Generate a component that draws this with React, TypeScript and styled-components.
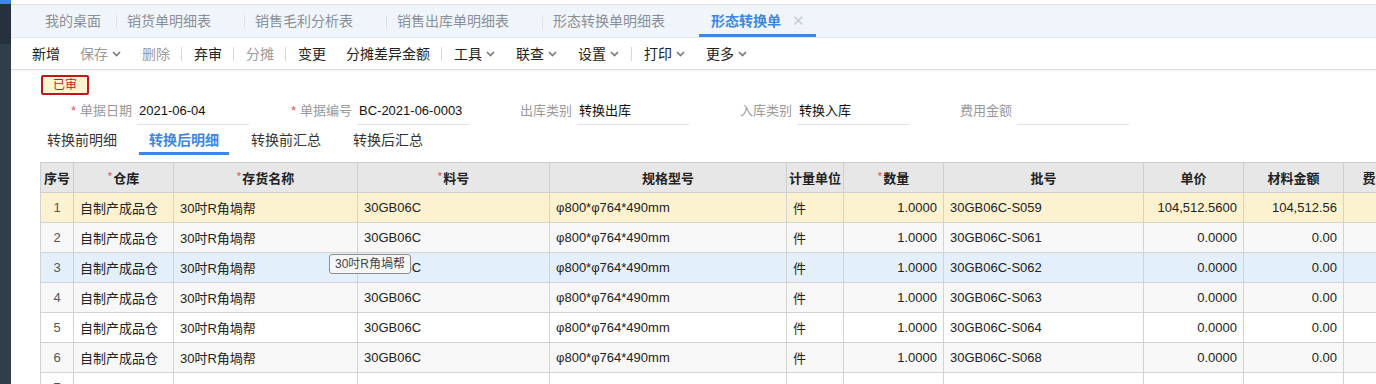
import React from "react";
import styled, { createGlobalStyle, css } from "styled-components";

const Global = createGlobalStyle`
  html, body { margin: 0; padding: 0; background: #fff; overflow: hidden; }
  body { font-family: "Liberation Sans", "Noto Sans CJK SC", sans-serif; color: #333; }
  * { box-sizing: border-box; }
`;

const Page = styled.div`
  display: flex;
  width: 1376px;
  height: 384px;
  overflow: hidden;
`;

const Sidebar = styled.div`
  width: 11px;
  flex: none;
  background: linear-gradient(#3d86f0 0, #3d86f0 4px, #27313d 4px, #27313d 44px, #323d4a 44px);
`;

const Main = styled.div`
  flex: 1;
  min-width: 0;
  display: flex;
  flex-direction: column;
  padding-top: 4px;
  & > * { flex: none; }
`;

const TabBar = styled.div`
  display: flex;
  align-items: stretch;
  height: 34px;
  padding-left: 24px;
  background: #f0f5fc;
  border-top: 1px solid #dcdfe3;
  border-bottom: 1px solid #e3e6ea;
`;

const Tab = styled.div<{ $closable?: boolean; $active?: boolean; $sep?: boolean }>`
  display: flex;
  align-items: center;
  gap: 11px;
  font-size: 14px;
  line-height: 20px;
  color: #8a8f96;
  padding: 0 ${(p) => (p.$closable ? 34 : 16)}px 1px 10px;
  position: relative;
  ${(p) =>
    p.$sep &&
    css`
      &::after {
        content: "";
        position: absolute;
        right: 0;
        top: 10px;
        height: 14px;
        width: 1px;
        background: #dde2e8;
      }
    `}
  ${(p) =>
    p.$active &&
    css`
      color: #3b86e6;
      font-weight: bold;
      padding: 2px 11px 0 12px;
      border-bottom: 3px solid #3b86e6;
    `}
`;

const Close = styled.span`
  font-weight: normal;
  color: #c8ccd1;
  font-size: 15px;
  line-height: 16px;
`;

const Toolbar = styled.div`
  display: flex;
  align-items: center;
  height: 32px;
  padding-left: 11px;
  background: #fff;
  border-bottom: 1px solid #d9d9d9;
  box-shadow: 0 1px 2px rgba(0, 0, 0, 0.05);
`;

const ToolItem = styled.div<{ $disabled?: boolean }>`
  display: flex;
  align-items: center;
  gap: 4px;
  padding: 0 10px;
  font-size: 14px;
  line-height: 20px;
  color: ${(p) => (p.$disabled ? "#9a9a9a" : "#222")};
`;

const ToolSep = styled.div`
  width: 1px;
  height: 14px;
  margin: 0 2px 0 1px;
  background: #d8d8d8;
`;

const Chevron = () => (
  <svg width="10" height="6" viewBox="0 0 10 6" style={{ marginTop: 1 }}>
    <polyline points="1,1 4.5,4.5 8,1" fill="none" stroke="#777" strokeWidth="1.6" />
  </svg>
);

const Content = styled.div`
  padding: 5px 0 0 0;
  display: flex;
  flex-direction: column;
  & > * { flex: none; }
`;

const BadgeRow = styled.div`
  padding-left: 30px;
  display: flex;
`;

const Badge = styled.div`
  height: 20px;
  width: 48px;
  border: 2px solid #c01818;
  border-radius: 2px;
  background: #fff6cf;
  color: #c01818;
  font-size: 12px;
  line-height: 16px;
  text-align: center;
`;

const FormRow = styled.div`
  display: flex;
  margin-top: 4px;
  padding-left: 18px;
`;

const Field = styled.div`
  display: flex;
  align-items: stretch;
  width: 220px;
  height: 26px;
`;

const Label = styled.div`
  width: 103px;
  margin-right: 5px;
  text-align: right;
  font-size: 13px;
  line-height: 24px;
  color: #999;
`;

const Req = styled.span`
  color: #e05555;
  margin-right: 4px;
`;

const Input = styled.div`
  width: 112px;
  border-bottom: 1px solid #e2e2e2;
  font-size: 13px;
  line-height: 24px;
  color: #111;
  padding-left: 2px;
  white-space: nowrap;
`;

const SubTabs = styled.div`
  display: flex;
  padding-left: 20px;
`;

const SubTab = styled.div<{ $active?: boolean }>`
  margin: 0 6px;
  padding: 3px 10px 0;
  font-size: 14px;
  line-height: 24px;
  color: ${(p) => (p.$active ? "#3b86e6" : "#333")};
  font-weight: ${(p) => (p.$active ? "bold" : "normal")};
  border-bottom: 3px solid ${(p) => (p.$active ? "#3b86e6" : "transparent")};
`;

const TableWrap = styled.div`
  margin-top: 7px;
  padding-left: 29px;
`;

const Table = styled.table`
  border-collapse: collapse;
  table-layout: fixed;
  width: 1393px;
  font-size: 13px;
`;

const Th = styled.th`
  height: 30px;
  padding: 0 2px;
  background: #e7e7e7;
  border: 1px solid #cfcfcf;
  font-weight: bold;
  color: #222;
  text-align: center;
  white-space: nowrap;
  overflow: hidden;
`;

const Star = styled.span`
  color: #e04848;
  font-weight: normal;
  font-size: 11px;
  vertical-align: 3px;
  margin-right: 1px;
`;

const Tr = styled.tr<{ $bg: string }>`
  height: 30px;
  background: ${(p) => p.$bg};
`;

const Td = styled.td<{ $align?: string; $muted?: boolean }>`
  border: 1px solid #d2d2d2;
  padding: 0 6px;
  text-align: ${(p) => p.$align || "left"};
  color: ${(p) => (p.$muted ? "#555" : "#222")};
  white-space: nowrap;
  overflow: hidden;
  position: relative;
`;

const NameCell = styled(Td)`
  overflow: visible;
`;

const Tooltip = styled.div`
  position: absolute;
  left: 155px;
  top: 1px;
  z-index: 2;
  height: 20px;
  padding: 0 5px;
  background: #f7f7f7;
  border: 1px solid #8d8d8d;
  border-radius: 3px;
  font-size: 12px;
  line-height: 18px;
  color: #444;
  white-space: nowrap;
`;

type Col = { title: string; w: number; req?: boolean };
const cols: Col[] = [
  { title: "序号", w: 33 },
  { title: "仓库", w: 100, req: true },
  { title: "存货名称", w: 184, req: true },
  { title: "料号", w: 192, req: true },
  { title: "规格型号", w: 237 },
  { title: "计量单位", w: 57 },
  { title: "数量", w: 100, req: true },
  { title: "批号", w: 200 },
  { title: "单价", w: 100 },
  { title: "材料金额", w: 100 },
  { title: "费用金额", w: 90 },
];

const batches = ["S059", "S061", "S062", "S063", "S064", "S068"];
const rowBg = ["#fcf2cf", "#f8f8f8", "#e4effc", "#f8f8f8", "#ffffff", "#f8f8f8", "#ffffff"];

const tabs = ["我的桌面", "销货单明细表", "销售毛利分析表", "销售出库单明细表", "形态转换单明细表"];

const tools: ({ t: string; d?: boolean; c?: boolean } | "sep")[] = [
  { t: "新增" },
  { t: "保存", d: true, c: true },
  { t: "删除", d: true },
  "sep",
  { t: "弃审" },
  "sep",
  { t: "分摊", d: true },
  "sep",
  { t: "变更" },
  { t: "分摊差异金额" },
  "sep",
  { t: "工具", c: true },
  { t: "联查", c: true },
  { t: "设置", c: true },
  "sep",
  { t: "打印", c: true },
  { t: "更多", c: true },
];

export default function App() {
  return (
    <>
      <Global />
      <Page>
        <Sidebar />
        <Main>
          <TabBar>
            {tabs.map((t, i) => (
              <Tab key={t} $closable={i > 0} $sep={i < tabs.length - 1}>
                {t}
              </Tab>
            ))}
            <Tab $active>
              形态转换单<Close>✕</Close>
            </Tab>
          </TabBar>
          <Toolbar>
            {tools.map((it, i) =>
              it === "sep" ? (
                <ToolSep key={i} />
              ) : (
                <ToolItem key={i} $disabled={it.d}>
                  {it.t}
                  {it.c && <Chevron />}
                </ToolItem>
              )
            )}
          </Toolbar>
          <Content>
            <BadgeRow>
              <Badge>已审</Badge>
            </BadgeRow>
            <FormRow>
              <Field>
                <Label>
                  <Req>*</Req>单据日期
                </Label>
                <Input>2021-06-04</Input>
              </Field>
              <Field>
                <Label>
                  <Req>*</Req>单据编号
                </Label>
                <Input>BC-2021-06-0003</Input>
              </Field>
              <Field>
                <Label>出库类别</Label>
                <Input>转换出库</Input>
              </Field>
              <Field>
                <Label>入库类别</Label>
                <Input>转换入库</Input>
              </Field>
              <Field>
                <Label>费用金额</Label>
                <Input />
              </Field>
            </FormRow>
            <SubTabs>
              <SubTab>转换前明细</SubTab>
              <SubTab $active>转换后明细</SubTab>
              <SubTab>转换前汇总</SubTab>
              <SubTab>转换后汇总</SubTab>
            </SubTabs>
            <TableWrap>
              <Table>
                <colgroup>
                  {cols.map((c) => (
                    <col key={c.title} style={{ width: c.w }} />
                  ))}
                </colgroup>
                <thead>
                  <tr>
                    {cols.map((c) => (
                      <Th key={c.title}>
                        {c.req && <Star>*</Star>}
                        {c.title}
                      </Th>
                    ))}
                  </tr>
                </thead>
                <tbody>
                  {batches.map((b, i) => (
                    <Tr key={b} $bg={rowBg[i]}>
                      <Td $align="center" $muted>
                        {i + 1}
                      </Td>
                      <Td>自制产成品仓</Td>
                      <NameCell>
                        30吋R角堝帮
                        {i === 2 && <Tooltip>30吋R角堝帮</Tooltip>}
                      </NameCell>
                      <Td>30GB06C</Td>
                      <Td>φ800*φ764*490mm</Td>
                      <Td>件</Td>
                      <Td $align="right">1.0000</Td>
                      <Td>30GB06C-{b}</Td>
                      <Td $align="right">{i === 0 ? "104,512.5600" : "0.0000"}</Td>
                      <Td $align="right">{i === 0 ? "104,512.56" : "0.00"}</Td>
                      <Td />
                    </Tr>
                  ))}
                  <Tr $bg={rowBg[6]}>
                    <Td $align="center" $muted>
                      7
                    </Td>
                    {cols.slice(1).map((c) => (
                      <Td key={c.title} />
                    ))}
                  </Tr>
                </tbody>
              </Table>
            </TableWrap>
          </Content>
        </Main>
      </Page>
    </>
  );
}
